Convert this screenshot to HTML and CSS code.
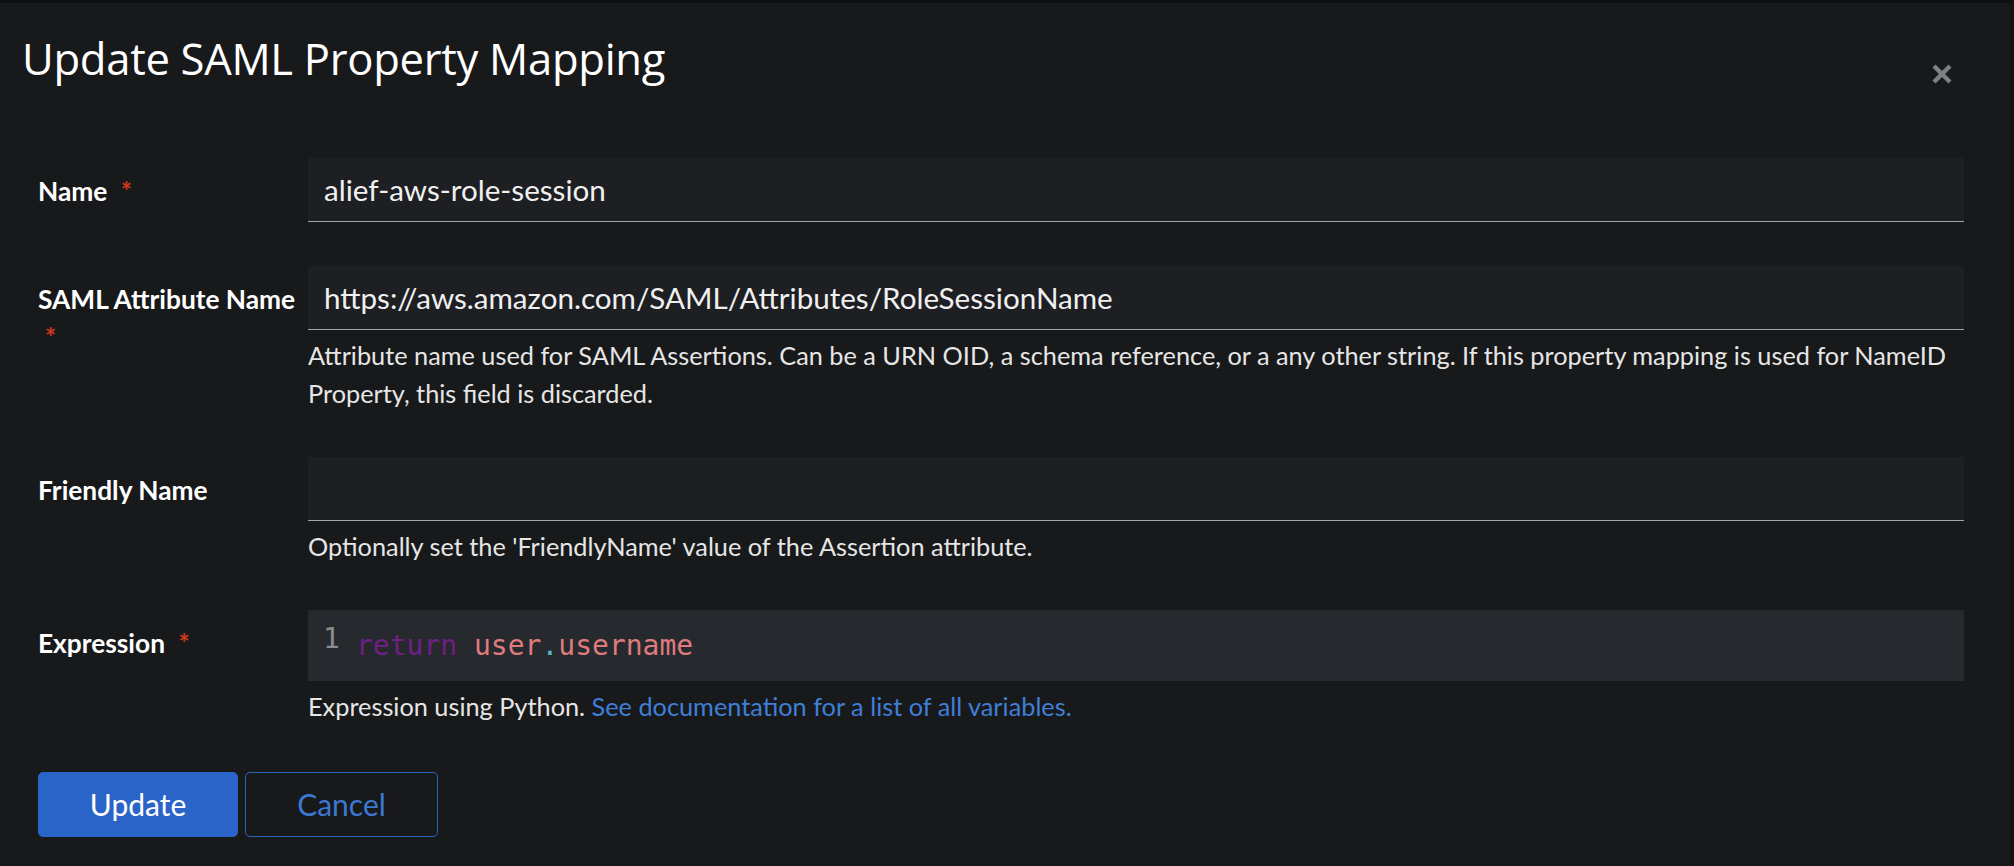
FILE: index.html
```html
<!DOCTYPE html>
<html lang="en">
<head>
<meta charset="utf-8">
<title>Update SAML Property Mapping</title>
<link rel="stylesheet" href="styles.css">
</head>
<body>
<div class="modal">
  <header class="modal-header">
    <h1 class="modal-title">Update SAML Property Mapping</h1>
    <button class="close" type="button" aria-label="Close">
      <svg viewBox="0 0 22 22" width="22" height="22" aria-hidden="true">
        <path d="M3 3 L19 19 M19 3 L3 19" stroke="currentColor" stroke-width="4.4" stroke-linecap="butt" fill="none"/>
      </svg>
    </button>
  </header>
  <form class="form">
    <div class="group">
      <label class="label" for="f-name">Name <span class="req">*</span></label>
      <div class="control">
        <input class="input" id="f-name" type="text" value="alief-aws-role-session">
      </div>
    </div>
    <div class="group">
      <label class="label" for="f-saml">SAML Attribute Name <span class="req">*</span></label>
      <div class="control">
        <input class="input" id="f-saml" type="text" value="https://aws.amazon.com/SAML/Attributes/RoleSessionName">
        <p class="help">Attribute name used for SAML Assertions. Can be a URN OID, a schema reference, or a any other string. If this property mapping is used for NameID Property, this field is discarded.</p>
      </div>
    </div>
    <div class="group">
      <label class="label" for="f-friendly">Friendly Name</label>
      <div class="control">
        <input class="input" id="f-friendly" type="text" value="">
        <p class="help">Optionally set the 'FriendlyName' value of the Assertion attribute.</p>
      </div>
    </div>
    <div class="group">
      <label class="label">Expression <span class="req">*</span></label>
      <div class="control">
        <div class="editor">
          <div class="gutter">1</div>
          <div class="code"><span class="kw">return</span> <span class="var">user</span><span class="dot">.</span><span class="var">username</span></div>
        </div>
        <p class="help">Expression using Python. <a class="link" href="#">See documentation for a list of all variables.</a></p>
      </div>
    </div>
    <div class="actions">
      <button class="btn btn-primary" type="button">Update</button>
      <button class="btn btn-secondary" type="button">Cancel</button>
    </div>
  </form>
</div>
</body>
</html>
```
FILE: styles.css
```css
html, body {
  margin: 0;
  padding: 0;
  height: 100%;
}
body {
  background: #18191b;
  color: #e6e6e6;
  font-family: Lato, "Noto Sans", sans-serif;
  overflow: hidden;
}
.modal {
  box-sizing: border-box;
  height: 100%;
  border-top: 3px solid #0f1011;
  border-right: 4px solid #121315;
  background: #18191b;
}
.modal-header {
  display: flex;
  justify-content: space-between;
  align-items: flex-start;
  padding: 28px 57px 0 22px;
}
.modal-title {
  margin: 0;
  font-family: "Open Sans", Lato, sans-serif;
  font-weight: 500;
  font-size: 43.6px;
  line-height: 54px;
  color: #ffffff;
  letter-spacing: -0.3px;
}
.close {
  margin-top: 32px;
  padding: 0;
  border: 0;
  background: none;
  color: #7e8083;
  width: 22px;
  height: 22px;
  display: block;
}
.close svg { display: block; }
.form {
  display: flex;
  flex-direction: column;
  gap: 44px;
  padding: 73px 46px 0 38px;
}
.group {
  display: grid;
  grid-template-columns: 263px 1fr;
  column-gap: 7px;
}
.label {
  padding-top: 14px;
  font-weight: 700;
  font-size: 26.3px;
  line-height: 1.45;
  color: #ffffff;
}
.req {
  margin-left: 7px;
  color: #d0381d;
}
.control {
  min-width: 0;
}
.input {
  display: block;
  box-sizing: border-box;
  width: 100%;
  height: 64px;
  margin: 0;
  padding: 0 16px;
  border: 0;
  border-bottom: 1px solid #a3a5a8;
  background: #1e1f23;
  color: #f0f0f0;
  font-family: Lato, "Noto Sans", sans-serif;
  font-size: 29.6px;
  outline: none;
}
.help {
  margin: 7px 0 0;
  font-size: 25.3px;
  line-height: 1.5;
  color: #e6e6e6;
}
.editor {
  display: flex;
  background: #26292d;
  height: 71px;
  box-sizing: border-box;
}
.gutter {
  width: 48px;
  box-sizing: border-box;
  padding: 10px 0 0 15px;
  font-family: "DejaVu Sans Mono", monospace;
  font-size: 28px;
  line-height: 38px;
  color: #8a8d90;
}
.code {
  padding-top: 17px;
  font-family: "DejaVu Sans Mono", monospace;
  font-size: 28px;
  line-height: 38px;
  white-space: pre;
}
.kw { color: #6f1f86; }
.var { color: #df7b7d; }
.dot { color: #56b6c2; }
.link {
  color: #3f7fd8;
  text-decoration: none;
}
.actions {
  display: flex;
  gap: 7px;
  margin-top: 2px;
}
.btn {
  box-sizing: border-box;
  height: 65px;
  padding: 0;
  border-radius: 5px;
  font-family: Lato, "Noto Sans", sans-serif;
  font-size: 30px;
  cursor: pointer;
}
.btn-primary {
  width: 200px;
  background: #2b64c8;
  border: 1px solid #2b64c8;
  color: #ffffff;
}
.btn-secondary {
  width: 193px;
  background: transparent;
  border: 1px solid #2d62bf;
  color: #3b78d3;
}
```
